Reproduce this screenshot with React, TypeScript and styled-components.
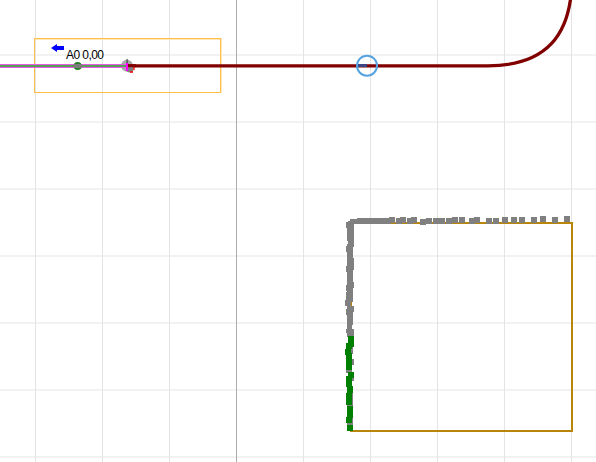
import React from "react";
import styled, { createGlobalStyle } from "styled-components";

const GlobalStyle = createGlobalStyle`
  body { margin: 0; background: #fff; overflow: hidden; }
`;

const Viewport = styled.main`
  width: 596px;
  height: 462px;
  overflow: hidden;
  background: #fff;
`;

const Drawing = styled.svg`
  display: block;
  width: 100%;
  height: 100%;
`;

const GridColumn = styled.rect<{ $axis?: boolean }>`
  fill: ${(p) => (p.$axis ? "#acacac" : "#e4e4e4")};
`;

const GridRow = styled.rect`
  fill: #f2f2f2;
`;

const Track = styled.path`
  fill: none;
  stroke: #800000;
  stroke-width: 3.3;
`;

const RoomOutline = styled.rect`
  fill: none;
  stroke: #b8860b;
  stroke-width: 2;
`;

const Marks = styled.g<{ $tone: string }>`
  fill: ${(p) => p.$tone};
  shape-rendering: crispEdges;
`;

const Label = styled.text`
  font: 12px "Liberation Sans", Arial, sans-serif;
  fill: #000;
`;

type Box = [number, number, number, number];

const columns = [35, 102, 169, 236, 303, 370, 437, 504, 571];
const rows = [54, 121, 188, 255, 322, 389, 456];

const topSamples: Box[] = [
  [389, 217], [396, 218], [400, 217], [407, 218], [411, 217], [420, 219],
  [426, 218], [433, 218], [439, 218], [446, 218], [452, 217], [459, 217],
  [469, 218], [474, 217], [486, 218], [493, 218], [502, 217], [511, 217],
  [519, 217], [531, 217], [540, 216], [552, 217], [564, 216],
].map(([x, y]) => [x, y, 6, 6]);

const wallSamples: Box[] = [
  [350, 219, 10, 5], [357, 218, 34, 6], [348, 221, 12, 3],
  [346, 222, 8, 6], [347, 228, 7, 13], [348, 241, 6, 3], [347, 244, 7, 3],
  [346, 246, 7, 6], [347, 252, 6, 14], [348, 258, 6, 12], [346, 266, 7, 6],
  [347, 272, 6, 13], [348, 282, 6, 6], [346, 285, 7, 6], [347, 290, 6, 2],
  [347, 283, 7, 5], [346, 292, 7, 8], [345, 300, 6, 6], [350, 300, 3, 2],
  [347, 306, 7, 6], [346, 309, 7, 6], [347, 315, 6, 10], [347, 325, 5, 4],
  [346, 329, 8, 4], [347, 333, 7, 4], [347, 346, 6, 8], [347, 359, 7, 6],
  [346, 369, 6, 4], [348, 375, 6, 6], [347, 386, 6, 45],
];

const activeSamples: Box[] = [
  [348, 336, 6, 11], [346, 343, 6, 6], [345, 349, 6, 6], [347, 353, 5, 3],
  [346, 354, 6, 16], [348, 372, 6, 6], [346, 376, 6, 11], [347, 386, 6, 7],
  [346, 393, 6, 12], [347, 406, 6, 12], [346, 417, 6, 6], [347, 425, 6, 6],
];

const Samples = ({ tone, boxes }: { tone: string; boxes: Box[] }) => (
  <Marks $tone={tone}>
    {boxes.map(([x, y, w, h], i) => (
      <rect key={i} x={x} y={y} width={w} height={h} />
    ))}
  </Marks>
);

export default function App() {
  return (
    <>
      <GlobalStyle />
      <Viewport>
        <Drawing viewBox="0 0 596 462">
          {rows.map((y) => (
            <GridRow key={y} x={0} y={y} width={596} height={2} />
          ))}
          {columns.map((x) => (
            <GridColumn key={x} x={x} y={0} width={1} height={462} $axis={x === 236} />
          ))}

          <RoomOutline x={351} y={223} width={221} height={208} />
          <Samples tone="#808080" boxes={[...topSamples, ...wallSamples]} />
          <Samples tone="#008000" boxes={activeSamples} />

          <path d="M34 38H221V93H34Z M35 39V92H220V39Z" fill="#ffbe46" fillRule="evenodd" />
          <path d="M35 39H220V40H35Z M221 38H222V93H221Z" fill="#ffe8be" />

          <circle cx={127} cy={65.8} r={6} fill="#a9a9a9" />
          <Track d="M127 65.8H488C546 65.8 571 35.5 572 -20" />
          <circle cx={130} cy={69} r={3.6} fill="#808080" />
          <path d="M134 67V71M133 72H129" stroke="#ff0000" strokeWidth={1.3} strokeDasharray="3 1" />
          <rect x={128} y={64.2} width={8} height={3} fill="#800000" />
          <rect x={126.6} y={59} width={1} height={12} fill="#303030" />

          <rect x={0} y={64} width={128} height={4} fill="#e65ae6" />
          <rect x={0} y={65} width={126} height={2} fill="#55a055" />
          <circle cx={77.7} cy={66} r={4} fill="#258025" />
          <rect x={74} y={64} width={8} height={4} rx={1} fill="#7c7c7c" />
          <rect x={126} y={63} width={2} height={8} fill="#ff00ff" />

          <rect x={357} y={64} width={10} height={3} fill="#3e4583" />
          <circle cx={367} cy={65.7} r={10} fill="none" stroke="#55a3df" strokeWidth={2} />

          <path d="M51 48L57 44V46H64V50H57V52Z" fill="#0000ff" />
          <Label x={66} y={59} textLength={38} lengthAdjust="spacing">A0 0,00</Label>
        </Drawing>
      </Viewport>
    </>
  );
}
